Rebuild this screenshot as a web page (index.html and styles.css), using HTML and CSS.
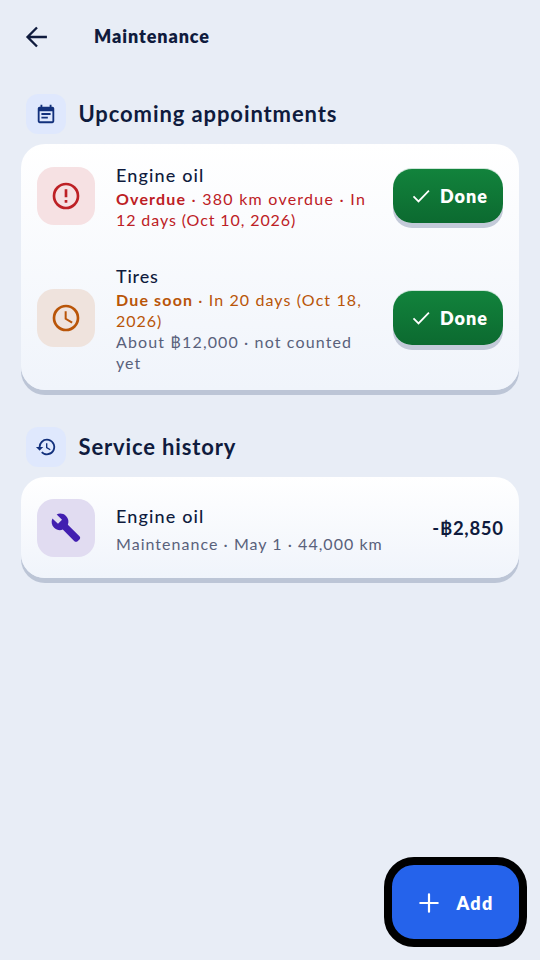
FILE: index.html
```html
<!DOCTYPE html>
<html lang="en">
<head>
<meta charset="utf-8">
<title>Maintenance</title>
<link rel="stylesheet" href="styles.css">
</head>
<body>
<header class="topbar">
  <svg class="back" viewBox="0 0 24 24"><path d="M20.500 12H3.900M12 3.900 3.900 12l8.100 8.100"/></svg>
  <h1><span class="t-page">Maintenance</span></h1>
</header>
<main>
  <section>
    <div class="section-head">
      <div class="badge"><svg viewBox="0 0 24 24"><path d="M19 4h-1V2h-2v2H8V2H6v2H5a2 2 0 0 0-2 2v14a2 2 0 0 0 2 2h14a2 2 0 0 0 2-2V6a2 2 0 0 0-2-2zm0 16H5V9h14zM7 11h10v2H7zm0 4h7v2H7z"/></svg></div>
      <h2><span class="t-upcoming">Upcoming appointments</span></h2>
    </div>
    <div class="card">
      <article class="row">
        <div class="tile tile-red"><svg viewBox="0 0 24 24"><path d="M11 15h2v2h-2zm0-8h2v6h-2zm1-5a10 10 0 1 0 0 20 10 10 0 0 0 0-20zm0 18a8 8 0 1 1 0-16 8 8 0 0 1 0 16z"/></svg></div>
        <div class="info">
          <h3><span class="t-engine">Engine oil</span></h3>
          <p class="red"><b class="t-overdue">Overdue</b><span class="t-red1"> · 380 km overdue · In</span><br><span class="t-red2">12 days (Oct 10, 2026)</span></p>
        </div>
        <button class="done"><svg viewBox="0 0 24 24"><path d="m3 12.500 6 6L21.500 5.500"/></svg><span class="t-done">Done</span></button>
      </article>
      <article class="row">
        <div class="tile tile-orange"><svg viewBox="0 0 24 24"><path d="M12 2a10 10 0 1 0 0 20 10 10 0 0 0 0-20zm0 18a8 8 0 1 1 0-16 8 8 0 0 1 0 16zm.5-13H11v6l5.200 3.150.8-1.250-4.500-2.650z"/></svg></div>
        <div class="info">
          <h3><span class="t-tires">Tires</span></h3>
          <p class="orange"><b class="t-due">Due soon</b><span class="t-or1"> · In 20 days (Oct 18,</span><br><span class="t-or2">2026)</span></p>
          <p class="gray"><span class="t-about">About ฿12,000 · not counted</span><br><span class="t-yet">yet</span></p>
        </div>
        <button class="done"><svg viewBox="0 0 24 24"><path d="m3 12.500 6 6L21.500 5.500"/></svg><span class="t-done">Done</span></button>
      </article>
    </div>
  </section>
  <section>
    <div class="section-head">
      <div class="badge"><svg viewBox="0 0 24 24"><path d="M13 3a9 9 0 0 0-9 9H1l3.900 3.900.070.140L9 12H6a7 7 0 1 1 2.060 4.940l-1.420 1.420A9 9 0 1 0 13 3zm-1 5v5l4.280 2.540.720-1.210-3.500-2.080V8z"/></svg></div>
      <h2><span class="t-history">Service history</span></h2>
    </div>
    <div class="card card-history">
      <article class="row row-history">
        <div class="tile tile-purple"><svg viewBox="0 0 24 24"><path d="M22.100 18.200 13.400 9.500c.900-2.300.400-4.700-1.400-6.500-1.900-1.900-4.700-2.300-7-1.200L9 5.800 6 8.800 1.800 4.800C.7 7.100 1.200 9.900 3.100 11.800c1.800 1.800 4.300 2.300 6.500 1.400l8.700 8.700c.6.600 1.700.700 2.400 0l1.400-1.300c.7-.7.7-1.700 0-2.400z"/></svg></div>
        <div class="info">
          <h3><span class="t-engine">Engine oil</span></h3>
          <p class="gray"><span class="t-maint">Maintenance · May 1 · 44,000 km</span></p>
        </div>
        <strong class="amount"><span class="t-amount">-฿2,850</span></strong>
      </article>
    </div>
  </section>
</main>
<button class="add"><svg viewBox="0 0 24 24"><path d="M12 2.500v19M2.500 12h19"/></svg><span class="t-add">Add</span></button>
</body>
</html>
```
FILE: styles.css
```css
* { box-sizing: border-box; }
body { margin: 0; width: 540px; height: 960px; overflow: hidden; background: #e8edf6; color: #0f1b3d; font-family: Lato, "Noto Sans", sans-serif; }
h1, h2, h3, p { margin: 0; white-space: nowrap; }
svg { display: block; flex: none; fill: currentColor; }
button { border: 0; padding: 0; font: inherit; color: #fff; display: flex; align-items: center; justify-content: center; }
.topbar { height: 74px; display: flex; align-items: center; padding-left: 23px; }
.back { width: 28px; height: 28px; fill: none; stroke: #0f1b3d; stroke-width: 2; }
h1 { margin-left: 43px; font-size: 18px; font-weight: 800; line-height: 26px; padding-bottom: 2px; }
main { padding: 0 21px; }
.section-head { display: flex; align-items: center; gap: 12.500px; height: 60px; padding-left: 5px; }
section:first-child { padding-top: 10px; }
section + section { padding-top: 27px; }
.badge { width: 40px; height: 40px; border-radius: 12px; background: #dfe8fd; color: #12307c; display: grid; place-items: center; }
.badge svg { width: 22px; height: 22px; }
h2 { font-size: 22px; font-weight: 700; line-height: 30px; }
.card { border-radius: 24px; background: linear-gradient(#fff, #f0f4fb); box-shadow: 0 5px 0 #bcc5d6; padding: 1px 0; }
.card-history { padding-bottom: 0; }
.row { display: flex; align-items: center; padding: 16px; }
.row-history { height: 100px; }
.tile { flex: none; width: 58px; height: 58px; border-radius: 17px; display: grid; place-items: center; }
.tile svg { width: 32px; height: 32px; }
.tile-red { background: #f6e1e3; color: #bd2025; }
.tile-orange { background: #efe3dd; color: #b95508; }
.tile-purple { background: #e1dcf1; color: #421fb0; }
.info { flex: 1; min-width: 0; margin-left: 21px; }
h3 { font-size: 18px; font-weight: 500; line-height: 25px; padding-top: 2px; }
p { font-size: 16px; line-height: 21px; }
.row-history .info { padding-top: 3px; }
.row-history p { line-height: 29px; }
.red { color: #bd2025; }
.orange { color: #b95508; }
.gray { color: #59617b; }
.done { width: 110px; height: 54px; gap: 9px; border-radius: 19px; background: linear-gradient(#12833c, #0c6a30); box-shadow: 0 5px 0 #c3cad9, 0 -1px 0 #cfe5da; font-size: 18px; font-weight: 800; padding: 1px 0 0 2px; }
.done svg { width: 20px; height: 20px; fill: none; stroke: #fff; stroke-width: 2.100; }
.amount { font-size: 18.500px; font-weight: 700; white-space: nowrap; }
.add { position: fixed; right: 13px; bottom: 13px; width: 143px; height: 90px; border: 8px solid #000; border-radius: 30px; background: #2563eb; gap: 16px; font-size: 18px; font-weight: 800; padding-top: 1px; }
.add svg { width: 22px; height: 22px; fill: none; stroke: #fff; stroke-width: 2.400; stroke-linecap: round; }

/* Per-string tracking */
.t-page { letter-spacing: .9px; }
.t-upcoming { letter-spacing: .9px; }
.t-history { letter-spacing: .85px; }
.t-engine { letter-spacing: 1.150px; }
.t-tires { letter-spacing: .8px; }
.t-overdue, .t-due { letter-spacing: 1.150px; }
.t-red1 { letter-spacing: 1.250px; }
.t-red2 { letter-spacing: .9px; }
.t-or1 { letter-spacing: 1.100px; }
.t-or2 { letter-spacing: 1px; }
.t-about { letter-spacing: 1.130px; }
.t-yet { letter-spacing: 1.100px; }
.t-maint { letter-spacing: 1.030px; }
.t-done { letter-spacing: 1px; margin-right: -1px; }
.t-amount { letter-spacing: .7px; margin-right: -.700px; }
.t-add { letter-spacing: 1.300px; margin-right: -1px; }
```
